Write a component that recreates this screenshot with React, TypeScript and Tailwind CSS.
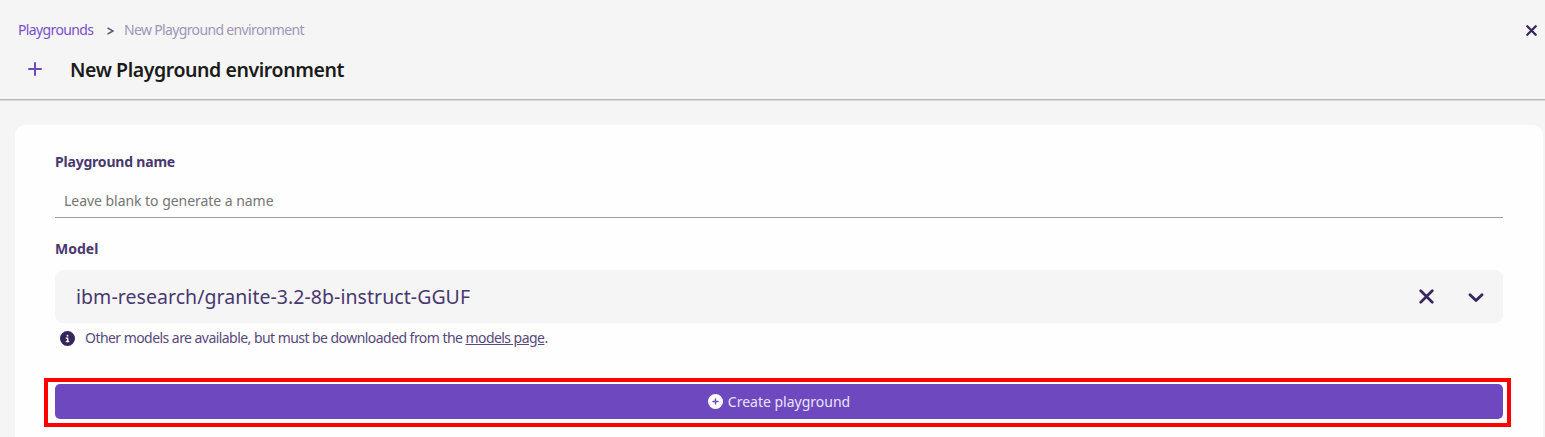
import React from 'react';
import { FaCircleInfo, FaCirclePlus } from 'react-icons/fa6';

function Cross({ className }: { className: string }) {
  return (
    <svg viewBox="0 0 14 14" className={className} fill="none" stroke="currentColor" strokeWidth="2.5" strokeLinecap="round">
      <path d="M1.6 1.6 12.4 12.4M12.4 1.6 1.6 12.4" />
    </svg>
  );
}

function Header() {
  return (
    <header className="h-[100px] shrink-0 border-b border-[#b6b6b6] pl-[18px] pr-2 pt-5 shadow-[0_1px_0_#d9d9d9]">
      <div className="flex h-5 items-center">
        <nav className="flex items-center whitespace-nowrap text-[14px] leading-5">
          <a className="w-[89px] tracking-[-0.63px] text-[#7a4fc9]">Playgrounds</a>
          <svg viewBox="0 0 7 8" className="mr-[10px] mt-[2px] h-2 w-[7px] text-[#5d5473]" fill="none" stroke="currentColor" strokeWidth="1.5">
            <path d="M.5 .9 6 4 .5 7.1" />
          </svg>
          <span className="tracking-[-0.65px] text-[#a096b8]">New Playground environment</span>
        </nav>
        <button className="ml-auto text-[#37255d]">
          <svg viewBox="0 0 11 11" className="h-[11px] w-[11px]" fill="none" stroke="currentColor" strokeWidth="2.3" strokeLinecap="round">
            <path d="M1.3 1.3 9.7 9.7M9.7 1.3 1.3 9.7" />
          </svg>
        </button>
      </div>
      <div className="mt-[15px] flex h-[30px] items-center pl-[10px]">
        <svg viewBox="0 0 14 14" className="-mt-[2px] mr-7 h-[14px] w-[14px] text-[#6d48bf]" fill="none" stroke="currentColor" strokeWidth="2" strokeLinecap="round">
          <path d="M7 1v12M1 7h12" />
        </svg>
        <h1 className="whitespace-nowrap text-[19.5px] font-semibold leading-[30px] tracking-[-0.42px] text-[#1b1b1b]">New Playground environment</h1>
      </div>
    </header>
  );
}

export default function App() {
  return (
    <div className="flex h-[437px] flex-col overflow-hidden bg-[#f5f5f5] font-['Noto_Sans',sans-serif]">
      <Header />
      <main className="ml-[15px] mr-[2px] mt-[25px] flex-1 rounded-t-[10px] bg-[#fefefe] px-10 pt-[27px] text-[#37255d]">
        <label className="block h-5 whitespace-nowrap text-[14px] font-bold leading-5 tracking-[-0.2px] text-[#49386f]">Playground name</label>
        <div className="mt-[12px] h-[34px] border-b border-[#9e9e9e] pl-[9px] text-[14px] leading-[33px] text-[#747474]">
          <span className="tracking-[-0.04px]">Leave blank to generate a name</span>
        </div>
        <label className="mt-[21px] block h-5 text-[14px] font-bold leading-5 text-[#49386f]">Model</label>
        <div className="mt-[11px] flex h-[53px] items-center rounded-lg bg-[#f5f5f5] pl-[21px] pr-[19px]">
          <span className="whitespace-nowrap text-[19.5px] tracking-[0.05px] text-[#49386f]">ibm-research/granite-3.2-8b-instruct-GGUF</span>
          <Cross className="ml-auto h-[15px] w-[15px]" />
          <svg viewBox="0 0 16 10" className="ml-[34px] mt-[2px] h-[10px] w-4" fill="none" stroke="currentColor" strokeWidth="2.8" strokeLinecap="round" strokeLinejoin="round">
            <path d="M2 1.8 8 7.5 14 1.8" />
          </svg>
        </div>
        <div className="mt-[5px] flex h-5 items-center pl-[5px] text-[14px] leading-5">
          <FaCircleInfo className="mr-[10px] h-[15px] w-[15px]" />
          <span className="whitespace-nowrap tracking-[-0.55px] text-[#58487b]">
            Other models are available, but must be downloaded from the <a className="underline">models page</a>.
          </span>
        </div>
        <div className="-ml-[11px] -mr-2 mt-[30px] h-[49px] border-4 border-[#ff0000] bg-[#fefefe] pl-[7px] pr-1 pt-[2px]">
          <button className="flex h-[35px] w-full items-center justify-center gap-[5px] rounded-[5px] bg-[#6d48bf] text-[14px] leading-5 text-[#eae3f7]">
            <FaCirclePlus className="h-[15px] w-[15px] text-white" />
            <span>Create playground</span>
          </button>
        </div>
      </main>
    </div>
  );
}
